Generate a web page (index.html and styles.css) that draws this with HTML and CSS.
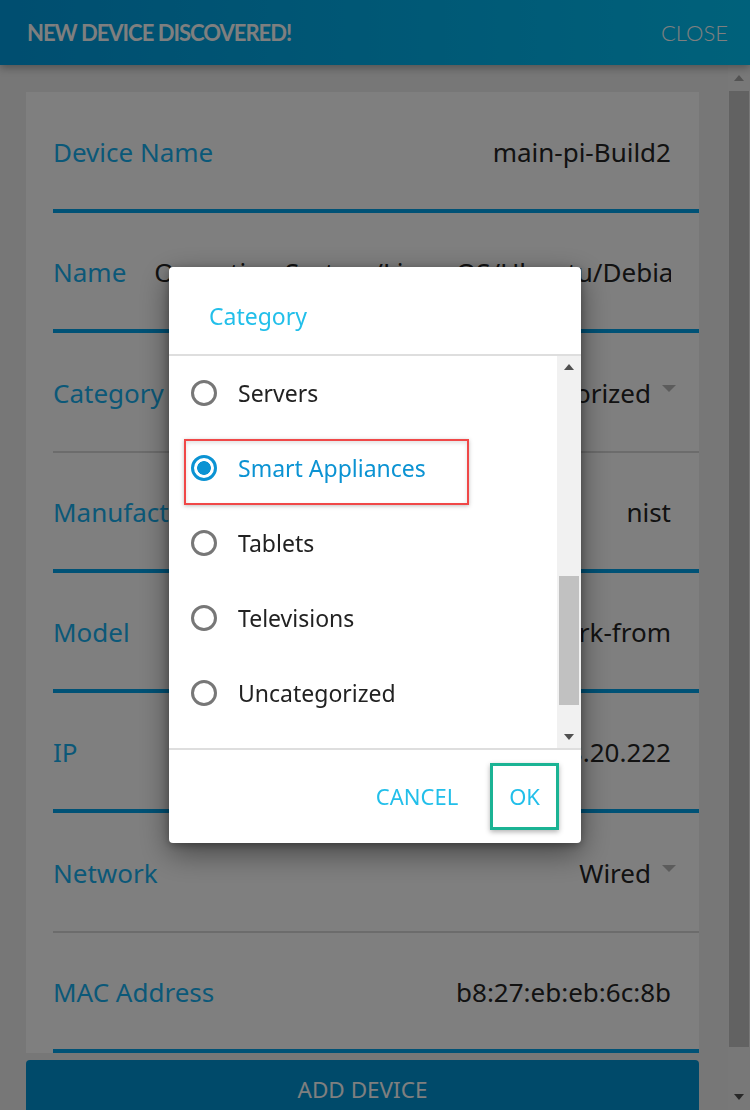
FILE: index.html
```html
<!DOCTYPE html>
<html>
<head>
<meta charset="utf-8">
<link rel="stylesheet" href="styles.css">
</head>
<body>
<div class="app">
  <header class="topbar">
    <span class="topbar-title">NEW DEVICE DISCOVERED!</span>
    <span class="topbar-close">CLOSE</span>
  </header>
  <div class="main-row">
    <main class="content">
      <section class="card">
        <div class="field"><span class="label">Device Name</span><span class="value">main-pi-Build2</span></div>
        <div class="field"><span class="label">Name</span><span class="text-input">Operating System/Linux OS/Ubuntu/Debian</span></div>
        <div class="field field-select"><span class="label">Category</span><span class="value">Uncategorized</span><span class="caret"></span></div>
        <div class="field"><span class="label">Manufacturer</span><span class="value">nist</span></div>
        <div class="field"><span class="label">Model</span><span class="value">pi-network-from</span></div>
        <div class="field"><span class="label">IP</span><span class="value">192.168.20.222</span></div>
        <div class="field field-select"><span class="label">Network</span><span class="value">Wired</span><span class="caret"></span></div>
        <div class="field"><span class="label">MAC Address</span><span class="value">b8:27:eb:eb:6c:8b</span></div>
      </section>
      <button class="add-btn">ADD DEVICE</button>
    </main>
    <div class="page-scroll">
      <div class="sb-btn"><span class="tri-up tri-dim"></span></div>
      <div class="page-thumb"></div>
      <div class="sb-fill"></div>
      <div class="sb-btn"><span class="tri-down"></span></div>
    </div>
  </div>
</div>

<div class="backdrop">
  <div class="dialog">
    <div class="dialog-title">Category</div>
    <div class="dialog-list">
      <div class="options">
        <div class="option"><span class="opt-box"><span class="radio"></span><span class="opt-text">Servers</span></span></div>
        <div class="option"><span class="opt-box opt-box-marked"><span class="radio radio-on"></span><span class="opt-text opt-text-on">Smart Appliances</span></span></div>
        <div class="option"><span class="opt-box"><span class="radio"></span><span class="opt-text">Tablets</span></span></div>
        <div class="option"><span class="opt-box"><span class="radio"></span><span class="opt-text">Televisions</span></span></div>
        <div class="option"><span class="opt-box"><span class="radio"></span><span class="opt-text">Uncategorized</span></span></div>
      </div>
      <div class="list-scroll">
        <div class="sb-btn-sm"><span class="tri-up"></span></div>
        <div class="list-gap"></div>
        <div class="list-thumb"></div>
        <div class="sb-fill"></div>
        <div class="sb-btn-sm"><span class="tri-down"></span></div>
      </div>
    </div>
    <div class="dialog-actions">
      <button class="action">CANCEL</button>
      <button class="action action-marked">OK</button>
    </div>
  </div>
</div>
</body>
</html>
```

FILE: styles.css
```css
* { box-sizing: border-box; }

body {
  margin: 0;
  width: 750px;
  height: 1110px;
  overflow: hidden;
  background: #eeeeee;
  font-family: "Noto Sans", "Open Sans", sans-serif;
}

.app {
  display: flex;
  flex-direction: column;
  height: 1110px;
}

.topbar {
  flex: none;
  height: 65px;
  display: flex;
  align-items: center;
  justify-content: space-between;
  padding: 0 22px 0 27px;
  background: linear-gradient(90deg, #009ce0, #00c3f6);
  box-shadow: 0 3px 8px rgba(0, 0, 0, 0.3);
  position: relative;
  z-index: 1;
}

.topbar-title {
  font-family: Lato, "Noto Sans", sans-serif;
  font-weight: 700;
  font-size: 22px;
  letter-spacing: -1px;
  color: #ffffff;
}

.topbar-close {
  font-family: Lato, "Noto Sans", sans-serif;
  font-weight: 300;
  font-size: 22px;
  color: #ffffff;
}

.main-row {
  flex: 1;
  display: flex;
  min-height: 0;
}

.content {
  flex: 1;
  min-width: 0;
  padding: 27px 0 0 26px;
  overflow: hidden;
}

.card {
  width: 673px;
  background: #ffffff;
  padding-top: 1px;
}

.field {
  height: 120px;
  margin-left: 27px;
  padding: 2px 28px 0 0;
  display: flex;
  align-items: center;
  border-bottom: 4px solid #00a4ec;
  font-size: 26px;
  white-space: nowrap;
}

.field-select {
  border-bottom: 2px solid #d8d8d8;
  padding-right: 23px;
}

.label {
  color: #16b0f0;
}

.value {
  margin-left: auto;
  color: #242424;
}

.text-input {
  margin-left: 28px;
  flex: 1;
  min-width: 0;
  overflow: hidden;
  color: #242424;
}

.caret {
  width: 0;
  height: 0;
  border-left: 7px solid transparent;
  border-right: 7px solid transparent;
  border-top: 7px solid #b8b8b8;
  margin: 0 0 9px 11px;
}

.add-btn {
  display: block;
  width: 673px;
  height: 60px;
  margin-top: 7px;
  padding: 0 0 2px;
  border: 0;
  border-radius: 4px 4px 0 0;
  background: #0094d4;
  color: #ffffff;
  font-family: "Noto Sans", sans-serif;
  font-size: 22.5px;
}

/* page scrollbar */
.page-scroll {
  flex: none;
  width: 22px;
  display: flex;
  flex-direction: column;
  background: #f1f1f1;
}

.sb-btn {
  flex: none;
  height: 26px;
  display: flex;
  align-items: center;
  justify-content: center;
}

.page-thumb {
  flex: none;
  height: 956px;
  margin: 0 1px;
  background: #c4c4c4;
}

.sb-fill { flex: 1; }

.tri-up {
  width: 0;
  height: 0;
  border-left: 5px solid transparent;
  border-right: 5px solid transparent;
  border-bottom: 6px solid #505050;
}

.tri-down {
  width: 0;
  height: 0;
  border-left: 5px solid transparent;
  border-right: 5px solid transparent;
  border-top: 6px solid #505050;
}

.tri-dim { border-bottom-color: #a6a6a6; }

/* overlay + dialog */
.backdrop {
  position: fixed;
  inset: 0;
  z-index: 10;
  background: rgba(0, 0, 0, 0.5);
  display: flex;
  align-items: center;
  justify-content: center;
}

.dialog {
  width: 412px;
  height: 576px;
  background: #ffffff;
  border-radius: 4px;
  box-shadow: 0 10px 30px rgba(0, 0, 0, 0.45), 0 2px 8px rgba(0, 0, 0, 0.3);
  display: flex;
  flex-direction: column;
  overflow: hidden;
}

.dialog-title {
  flex: none;
  height: 89px;
  padding: 10px 0 0 40px;
  display: flex;
  align-items: center;
  border-bottom: 2px solid #dedede;
  color: #22bfea;
  font-size: 23px;
}

.dialog-list {
  flex: none;
  height: 392px;
  display: flex;
}

.options {
  flex: 1;
  padding-bottom: 17px;
}

.option {
  height: 75px;
  padding: 0 0 1px 15px;
  display: flex;
  align-items: flex-end;
}

.opt-box {
  width: 285px;
  height: 66px;
  padding: 0 0 8px 5px;
  border: 2px solid transparent;
  display: flex;
  align-items: center;
}

.opt-box-marked {
  border-color: #f04848;
  box-shadow: 0 1px 4px rgba(0, 0, 0, 0.25), inset 0 2px 4px rgba(0, 0, 0, 0.12);
}

.radio {
  flex: none;
  width: 26px;
  height: 26px;
  border: 3px solid #777777;
  border-radius: 50%;
}

.radio-on {
  border-color: #0b93d3;
  background: radial-gradient(circle, #0b93d3 0 6.5px, #ffffff 7.2px);
}

.opt-text {
  margin-left: 21px;
  font-size: 23px;
  color: #222222;
  white-space: nowrap;
}

.opt-text-on { color: #0b93d3; }

.list-scroll {
  flex: none;
  width: 24px;
  display: flex;
  flex-direction: column;
  background: #f1f1f1;
}

.sb-btn-sm {
  flex: none;
  height: 22px;
  display: flex;
  align-items: center;
  justify-content: center;
}

.list-gap {
  flex: none;
  height: 198px;
}

.list-thumb {
  flex: none;
  height: 129px;
  margin: 0 2px;
  background: #c1c1c1;
}

.dialog-actions {
  flex: 1;
  border-top: 2px solid #dedede;
  display: flex;
  justify-content: flex-end;
  align-items: center;
  gap: 13px;
  padding: 0 22px 0 0;
}

.action {
  height: 67px;
  padding: 0 16px 2px;
  border: 3px solid transparent;
  background: transparent;
  color: #22bfea;
  font-family: "Noto Sans", sans-serif;
  font-size: 22px;
}

.action-marked {
  border-color: #1bb394;
  box-shadow: 0 2px 5px rgba(0, 0, 0, 0.3);
}
```
